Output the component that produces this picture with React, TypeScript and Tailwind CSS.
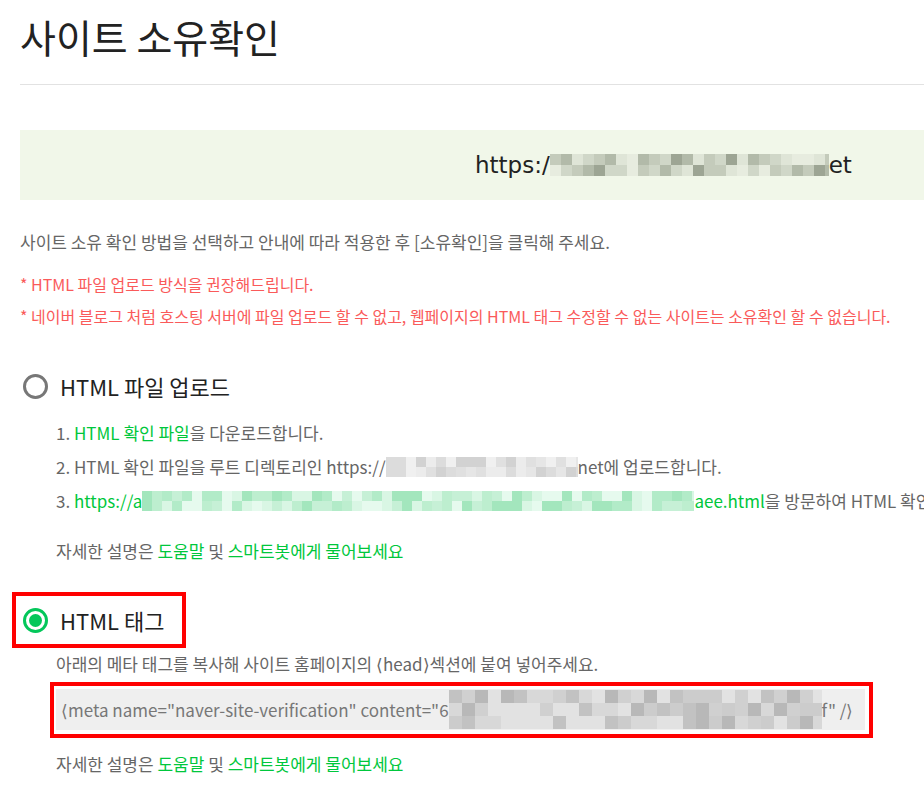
import type { ReactNode } from "react";

const FONT = "font-['Noto_Sans_CJK_KR','Noto_Sans',sans-serif]";

function rng(seed: number) {
  let s = seed;
  return () => {
    s = (s * 9301 + 49297) % 233280;
    return s / 233280;
  };
}

// pixelated (blurred-out) part of a url / key
function Mosaic({
  width,
  rows,
  cell,
  colors,
  seed
}: {
  width: number;
  rows: number;
  cell: number;
  colors: string[];
  seed: number;
}) {
  const r = rng(seed);
  const cols = Math.ceil(width / cell);
  return (
    <span className="inline-flex shrink-0 flex-col overflow-hidden align-middle" style={{ width }}>
      {Array.from({ length: rows }).map((_, y) => (
        <span key={y} className="flex">
          {Array.from({ length: cols }).map((_, x) => (
            <span
              key={x}
              className="shrink-0"
              style={{
                width: cell,
                height: cell,
                background: colors[Math.floor(r() * colors.length)]
              }}
            />
          ))}
        </span>
      ))}
    </span>
  );
}

const GREY = ["#e6e6e6", "#dcdcdc", "#d2d2d2", "#ececec", "#e0e0e0", "#f0f0f0"];
const GREY_DARK = ["#d8d8d8", "#cccccc", "#c2c2c2", "#b8b8b8", "#e2e2e2", "#d0d0d0"];
const MINT = ["#c6f0d6", "#b2ebc8", "#d9f6e4", "#a3e6bd", "#e6faee", "#bdeecf"];
const SAGE = ["#dfe5d7", "#d0d7c8", "#c4cbbb", "#b2baa9", "#9da594", "#e7ecdf"];

function RadioHeading({
  checked,
  outlined,
  children
}: {
  checked: boolean;
  outlined: boolean;
  children: ReactNode;
}) {
  return (
    <div
      className={
        "-ml-2 inline-flex h-[56px] items-center gap-[12px] border-4 pl-[7px] pr-[18px] " +
        (outlined ? "border-[#ff0000]" : "border-transparent")
      }
    >
      {checked ? (
        <span className="flex h-[25px] w-[25px] items-center justify-center rounded-full border-[3px] border-[#03c75a]">
          <span className="h-[13px] w-[13px] rounded-full bg-[#03c75a]" />
        </span>
      ) : (
        <span className="h-[25px] w-[25px] rounded-full border-[3px] border-[#777]" />
      )}
      <span className="text-[22px] leading-none text-[#222]">{children}</span>
    </div>
  );
}

function HelpLine() {
  return (
    <p className="text-[17px] leading-[24px] text-[#666]">
      자세한 설명은 <span className="text-[#00c73c]">도움말</span> 및{" "}
      <span className="text-[#00c73c]">스마트봇에게 물어보세요</span>
    </p>
  );
}

export default function App() {
  return (
    <div className={"h-[791px] w-[924px] overflow-hidden bg-white " + FONT}>
      <div className="w-[1300px] whitespace-nowrap pl-5">
        <h1 className="mt-[14px] h-[44px] text-[39px] leading-[44px] text-[#222]">사이트 소유확인</h1>
        <div className="mt-[26px] h-px bg-[#e2e2e2]" />

        <div className="mt-[45px] flex h-[70px] items-center bg-[#f1f7e9] pl-[455px] font-['DejaVu_Sans',sans-serif] text-[23px] text-[#222]">
          <span>https:/</span>
          <Mosaic width={279} rows={2} cell={11} colors={SAGE} seed={7} />
          <span>et</span>
        </div>

        <p className="mt-[30px] text-[17px] leading-[24px] text-[#666]">
          사이트 소유 확인 방법을 선택하고 안내에 따라 적용한 후 [소유확인]을 클릭해 주세요.
        </p>
        <p className="mt-[18px] text-[16px] leading-[24px] text-[#fa5a5a]">* HTML 파일 업로드 방식을 권장해드립니다.</p>
        <p className="mt-[8px] text-[16px] leading-[24px] text-[#fa5a5a]">
          * 네이버 블로그 처럼 호스팅 서버에 파일 업로드 할 수 없고, 웹페이지의 HTML 태그 수정할 수 없는 사이트는 소유확인 할 수 없습니다.
        </p>

        <div className="mt-[30px]">
          <RadioHeading checked={false} outlined={false}>
            HTML 파일 업로드
          </RadioHeading>
        </div>

        <div className="pl-9">
          <ol className="mt-[2px] text-[17px] leading-[34px] text-[#666]">
            <li>
              1. <span className="text-[#00c73c]">HTML 확인 파일</span>을 다운로드합니다.
            </li>
            <li className="flex items-center">
              <span>2. HTML 확인 파일을 루트 디렉토리인 https://</span>
              <Mosaic width={192} rows={2} cell={10} colors={GREY} seed={3} />
              <span>net에 업로드합니다.</span>
            </li>
            <li className="flex items-center">
              <span className="text-[#00c73c]">
                <span className="text-[#666]">3. </span>https://a
              </span>
              <Mosaic width={552} rows={2} cell={10} colors={MINT} seed={11} />
              <span className="text-[#00c73c]">aee.html</span>
              <span>을 방문하여 HTML 확인</span>
            </li>
          </ol>
          <div className="mt-[21px]">
            <HelpLine />
          </div>
        </div>

        <div className="mt-[29px]">
          <RadioHeading checked outlined>
            HTML 태그
          </RadioHeading>
        </div>

        <div className="pl-9">
          <p className="mt-[4px] text-[17px] leading-[24px] text-[#666]">
            아래의 메타 태그를 복사해 사이트 홈페이지의 ⟨head⟩섹션에 붙여 넣어주세요.
          </p>
        </div>

        <div className="ml-[30px] mt-[6px] w-[823px] border-4 border-[#ff0000] pb-1 pl-[2px] pr-1 pt-[3px]">
          <div className="flex h-[41px] items-center bg-[#efefef] pl-[5px] text-[17px] text-[#777]">
            <span>⟨meta name="naver-site-verification" content="6</span>
            <Mosaic width={373} rows={3} cell={13} colors={GREY_DARK} seed={5} />
            <span>f" /⟩</span>
          </div>
        </div>

        <div className="mt-[14px] pl-9">
          <HelpLine />
        </div>
      </div>
    </div>
  );
}
